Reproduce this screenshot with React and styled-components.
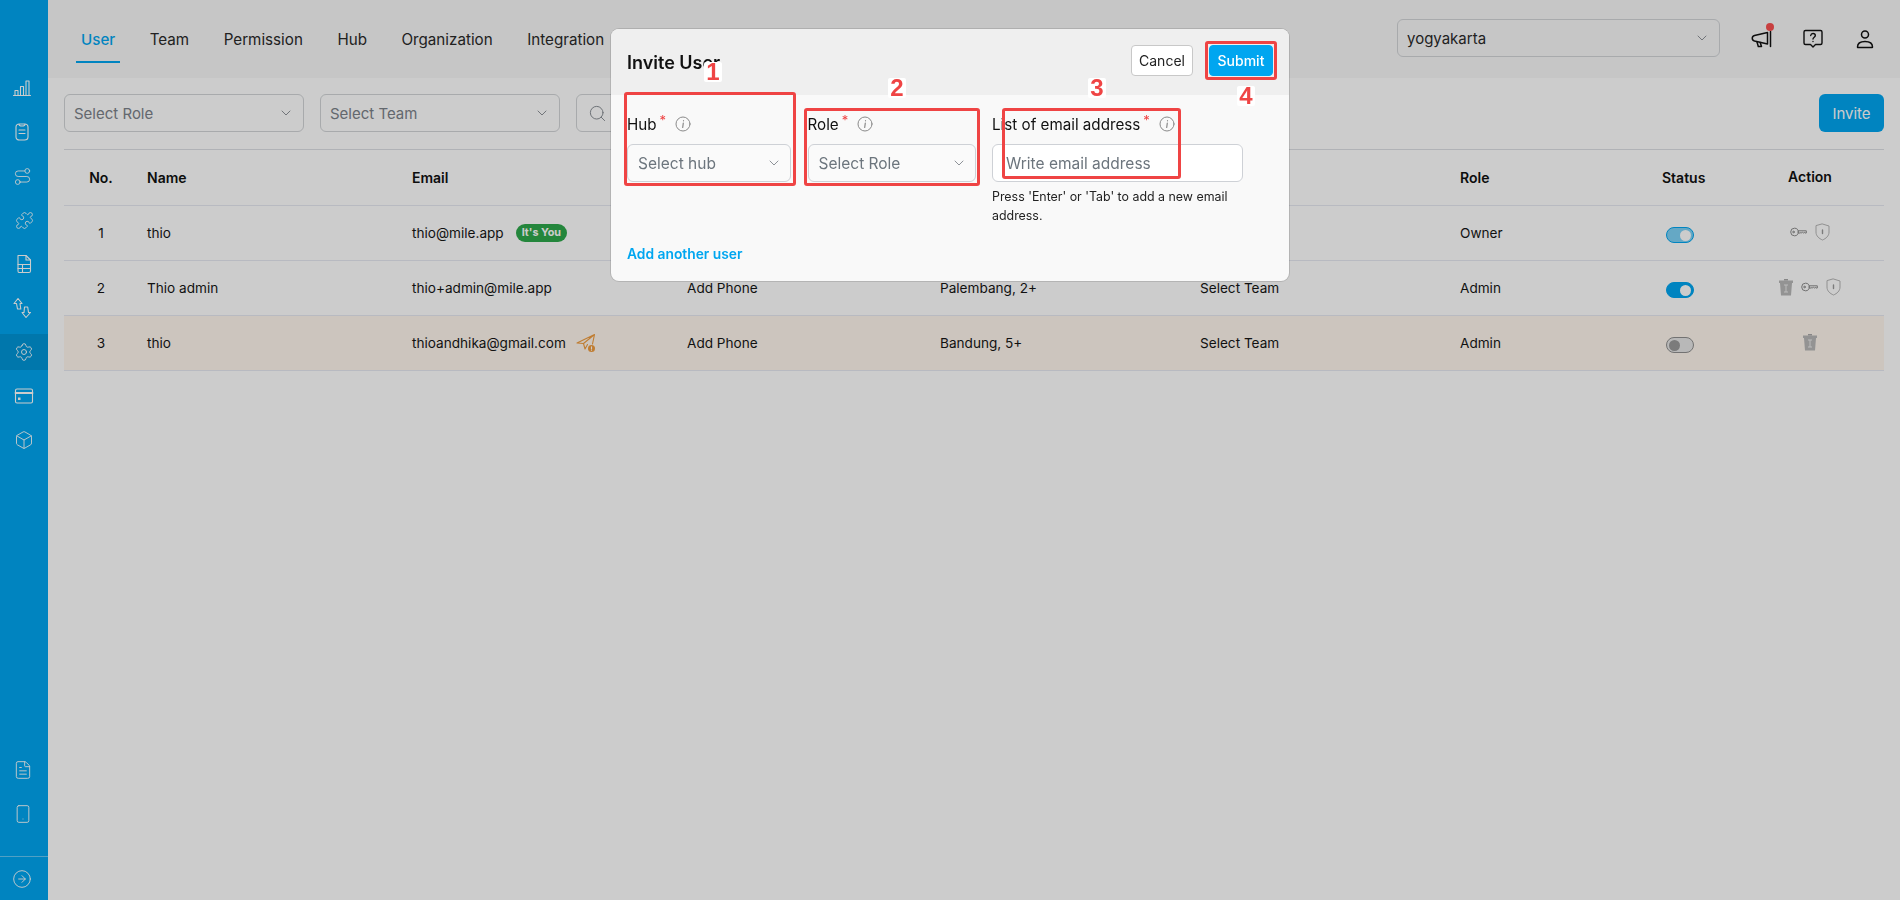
import React from 'react';
import styled, { createGlobalStyle } from 'styled-components';
import {
  Route,
  Puzzle,
  Settings,
  Box,
  FileText,
  Smartphone,
  CircleArrowRight,
  ChevronDown,
  Search,
} from 'lucide-react';

const GlobalStyle = createGlobalStyle`
  html, body {
    margin: 0;
    height: 100%;
    overflow: hidden;
  }
  body {
    font-family: Inter, "Liberation Sans", sans-serif;
    font-size: 13.6px;
    color: #161616;
    background: #fff;
  }
`;

const Page = styled.div`
  display: flex;
  height: 900px;
`;

const Sidebar = styled.nav`
  width: 48px;
  flex-shrink: 0;
  background: #00a6f0;
  display: flex;
  flex-direction: column;
  padding-top: 70px;
  box-sizing: border-box;
`;

const NavGroup = styled.div`
  display: flex;
  flex-direction: column;
  gap: 8px;
`;

const NavBottom = styled(NavGroup)`
  margin-top: auto;
`;

const NavItem = styled.div`
  height: 36px;
  display: flex;
  align-items: center;
  justify-content: center;
  color: #fff;
  background: ${(p) => (p.$active ? '#0095d8' : 'transparent')};
`;

const NavFooter = styled.div`
  margin-top: 24px;
  height: 43px;
  border-top: 1px solid rgba(255, 255, 255, 0.4);
  display: flex;
  align-items: center;
  justify-content: center;
  color: #fff;
`;

const Main = styled.main`
  flex: 1;
  min-width: 0;
`;

const TopBar = styled.header`
  height: 78px;
  background: #f8f8f8;
  display: flex;
  align-items: flex-start;
  padding: 0 23px 0 28px;
  box-sizing: border-box;
`;

const Tabs = styled.div`
  display: flex;
  gap: 24.5px;
  margin-top: 18px;
  flex: 1;
`;

const Tab = styled.div`
  height: 43px;
  line-height: 43px;
  padding: 0 5px;
  font-size: 15.2px;
  border-bottom: 2px solid ${(p) => (p.$active ? '#00a6f0' : 'transparent')};
  color: ${(p) => (p.$active ? '#00a6f0' : '#2a2a2a')};
  font-weight: ${(p) => (p.$active ? 500 : 400)};
`;

const SelectBox = styled.div`
  width: ${(p) => p.$width}px;
  height: 38px;
  box-sizing: border-box;
  border: 1px solid #d2d5d8;
  border-radius: 6px;
  display: flex;
  align-items: center;
  justify-content: space-between;
  padding: 0 9px;
  font-size: 15px;
  color: ${(p) => (p.$filled ? '#2a2a2a' : '#7c828a')};

  svg {
    color: #858a90;
  }
`;

const LocationBox = styled(SelectBox)`
  margin-top: 19px;
`;

const ModalSelect = styled(SelectBox)`
  background: #fafafa;
  border-color: #ced1d6;
  padding: 0 8px 0 10px;
  font-size: 15.5px;
  color: #6c757d;
`;

const TopIcons = styled.div`
  display: flex;
  margin-top: 27px;
  margin-left: 29px;
  gap: 28px;
`;

const TopIcon = styled.div`
  position: relative;
  width: 24px;
  height: 24px;
  display: flex;
  align-items: center;
  justify-content: center;
  color: #111;
`;

const Dot = styled.span`
  position: absolute;
  top: -4px;
  right: -1px;
  width: 8px;
  height: 8px;
  border-radius: 50%;
  background: #f94f4f;
`;

const Content = styled.section`
  padding: 16px 16px 0;
`;

const FilterRow = styled.div`
  display: flex;
  gap: 16px;
  padding-bottom: 17px;
  border-bottom: 1px solid #dcdfe4;
`;

const SearchBox = styled.div`
  width: 300px;
  height: 38px;
  box-sizing: border-box;
  border: 1px solid #d2d5d8;
  border-radius: 6px;
  display: flex;
  align-items: center;
  padding: 0 11px;
  color: #858a90;
`;

const InviteButton = styled.button`
  margin-left: auto;
  width: 65px;
  height: 38px;
  border: 0;
  border-radius: 6px;
  background: #00a6f0;
  color: #fff;
  font-family: inherit;
  font-size: 15px;
`;

const Row = styled.div`
  display: grid;
  grid-template-columns: 83px 265px 275px 253px 260px 260px 200px 76px 148px;
  align-items: center;
  height: 55px;
  box-sizing: border-box;
  border-bottom: 1px solid #e6e9f2;
  background: ${(p) => (p.$warn ? '#fff7ee' : 'transparent')};
`;

const HeadRow = styled(Row)`
  height: 56px;
  font-size: 14px;
  font-weight: 600;
  color: #111;
`;

const NoCell = styled.div`
  text-align: center;
  padding-right: 9px;
`;

const Cell = styled.div`
  display: flex;
  align-items: center;
`;

const StatusCell = styled(Cell)`
  padding-left: ${(p) => p.$pad}px;
`;

const ActionCell = styled(Cell)`
  justify-content: center;
  gap: 8px;
  margin-top: -2px;
`;

const YouBadge = styled.span`
  margin-left: 12px;
  height: 18px;
  line-height: 18px;
  padding: 0 6px;
  border-radius: 9px;
  background: #2ea84b;
  color: #fff;
  font-size: 10.8px;
  font-weight: 700;
`;

const Toggle = styled.span`
  width: 28px;
  height: 16px;
  margin-top: 4px;
  box-sizing: border-box;
  border-radius: 8px;
  display: flex;
  align-items: center;
  padding: 0 2px;
  justify-content: ${(p) => (p.$on ? 'flex-end' : 'flex-start')};
  background: ${(p) => (p.$on ? (p.$muted ? '#7fd2f7' : '#00a6f0') : '#e6e6e6')};
  border: 1px solid ${(p) => (p.$on ? '#00a6f0' : '#8f8f8f')};

  &::after {
    content: '';
    width: 11px;
    height: 11px;
    border-radius: 50%;
    background: ${(p) => (p.$on ? '#fff' : '#9a9a9a')};
  }
`;

const Backdrop = styled.div`
  position: fixed;
  inset: 0;
  background: rgba(0, 0, 0, 0.2);
  display: flex;
  justify-content: center;
  align-items: flex-start;
  padding-top: 29px;
`;

const Modal = styled.div`
  position: relative;
  width: 678px;
  background: #f9f9f9;
  border-radius: 8px;
  box-shadow: 0 0 0 1px rgba(0, 0, 0, 0.12);
`;

const ModalHead = styled.div`
  height: 66px;
  box-sizing: border-box;
  padding: 16px 16px 0;
  display: flex;
  align-items: flex-start;
  gap: 16px;
  background: #efefef;
  border-radius: 8px 8px 0 0;
`;

const ModalTitle = styled.h2`
  margin: 7px auto 0 0;
  font-size: 18px;
  line-height: 22px;
  font-weight: 600;
  color: #111;
`;

const ModalButton = styled.button`
  height: 31px;
  width: ${(p) => p.$width}px;
  border-radius: 4px;
  font-family: inherit;
  font-size: 14px;
  padding: 0;
  border: 1px solid ${(p) => (p.$primary ? '#00a6f0' : '#c8c8c8')};
  background: ${(p) => (p.$primary ? '#00a6f0' : '#fff')};
  color: ${(p) => (p.$primary ? '#fff' : '#222')};
  font-weight: ${(p) => (p.$primary ? 500 : 400)};
`;

const ModalBody = styled.div`
  padding: 19px 16px 18px;
`;

const Fields = styled.div`
  display: grid;
  grid-template-columns: 164px 168px 251px;
  column-gap: 16.5px;
`;

const Field = styled.div`
  min-width: 0;
`;

const Label = styled.div`
  height: 20px;
  margin-bottom: 10px;
  display: flex;
  align-items: center;
  font-size: 15.2px;
  color: #111;
  white-space: nowrap;
`;

const Star = styled.span`
  color: #ef4444;
  font-size: 13px;
  line-height: 1;
  margin: -7px 9px 0 3px;
`;

const EmailInput = styled.input`
  width: 100%;
  height: 38px;
  box-sizing: border-box;
  border: 1px solid #ced1d6;
  border-radius: 6px;
  padding: 0 13px;
  font-family: inherit;
  font-size: 15.5px;
  background: #fff;

  &::placeholder {
    color: #6c757d;
    opacity: 1;
  }
`;

const Helper = styled.p`
  margin: 5px 0 0;
  font-size: 12.4px;
  line-height: 19px;
  color: #222;
`;

const AddLink = styled.div`
  margin-top: 20px;
  font-size: 13.8px;
  line-height: 18px;
  font-weight: 600;
  color: #00a6f0;
`;

const Mark = styled.div`
  position: absolute;
  left: ${(p) => p.$x}px;
  top: ${(p) => p.$y}px;
  width: ${(p) => p.$w}px;
  height: ${(p) => p.$h}px;
  box-sizing: border-box;
  border: 3px solid #ef4444;
  border-radius: 3px;
  pointer-events: none;
`;

const MarkNumber = styled.span`
  position: absolute;
  left: ${(p) => p.$x}px;
  top: ${(p) => p.$y}px;
  width: 18px;
  height: 20px;
  background: #fff;
  color: #ef4444;
  font-family: "Liberation Sans", Arial, sans-serif;
  font-size: 24px;
  line-height: 20px;
  font-weight: 700;
  text-align: center;
  border-radius: 2px;
`;

const line = { fill: 'none', stroke: 'currentColor', strokeLinecap: 'round', strokeLinejoin: 'round' };

const Bars = () => (
  <svg width="20" height="20" viewBox="0 0 20 20" {...line} strokeWidth="1.1" style={{ marginLeft: -4 }}>
    <path d="M1.500 17.500h17M3 17.500v-5h3v5M8.500 17.500v-9h3v9M14 17.500V3h3v14.500" />
  </svg>
);

const Drum = () => (
  <svg width="20" height="20" viewBox="0 0 20 20" {...line} strokeWidth="1.1" style={{ marginLeft: -4 }}>
    <path d="M7.500 2h5c2 0 3.500 1 3.500 3v10c0 2-1.500 3-3.500 3h-5C5.500 18 4 17 4 15V5c0-2 1.500-3 3.500-3z" />
    <path d="M7 2.200c0 1.200 1 1.800 3 1.800s3-.6 3-1.800M7 8h6M7 11.500h6" />
  </svg>
);

const SheetFile = () => (
  <svg width="20" height="20" viewBox="0 0 20 20" {...line} strokeWidth="1.1">
    <path d="M4 1.500h8l4.500 4.500v11c0 1-.5 1.500-1.500 1.500H5c-.7 0-1-.5-1-1.500z" />
    <path d="M4 10.500h12.500M4 14.500h12.500M8.500 10.500v8M12 1.500v4.500h4.500" />
  </svg>
);

const Swap = () => (
  <svg width="22" height="22" viewBox="0 0 22 22" {...line} strokeWidth="1.1" style={{ marginLeft: -2 }}>
    <path d="M6 1.500l4 5H8l.8 5.500H5.500L4.500 6.500H2z" />
    <path d="M14 20.500l4.500-5h-2l-.8-5.500h-3.200l-.5 5.500H10z" />
  </svg>
);

const Card = () => (
  <svg width="20" height="20" viewBox="0 0 20 20" {...line} strokeWidth="1.1">
    <rect x="1.500" y="3" width="17" height="14" rx="1.500" />
    <path d="M1.500 7h17" strokeWidth="1.800" />
    <rect x="4" y="11.500" width="2.500" height="2.500" fill="currentColor" stroke="none" />
  </svg>
);

const Horn = () => (
  <svg width="24" height="24" viewBox="0 0 24 24" {...line} strokeWidth="1.500">
    <path d="M5.500 8.500L18.500 5.500v11.500l-13-3c-3-.8-3-4.800 0-5.500z" />
    <path d="M21.500 4.500v15M8 15l1.300 4.500h3.200L11.200 15.500" />
  </svg>
);

const HelpChat = () => (
  <svg width="22" height="22" viewBox="0 0 22 22" {...line} strokeWidth="1.400">
    <path d="M3.500 2.500h15c1 0 1.500.5 1.500 1.500v11c0 1-.5 1.500-1.500 1.500h-5L11 19l-2.500-2.500h-5c-1 0-1.500-.5-1.500-1.500V4c0-1 .5-1.500 1.500-1.500z" />
    <path d="M8.700 7.500c.2-1.300 1.100-2 2.300-2 1.300 0 2.300.8 2.300 2 0 1.700-2.300 1.700-2.300 3.500M11 13.500v.1" />
  </svg>
);

const Person = () => (
  <svg width="22" height="22" viewBox="0 0 22 22" {...line} strokeWidth="1.500">
    <circle cx="11" cy="6.500" r="3.500" />
    <path d="M3.500 19c0-3.800 3.200-5.500 7.500-5.500s7.500 1.700 7.500 5.500c0 .3-.2.500-.5.500H4c-.3 0-.5-.2-.5-.5z" />
  </svg>
);

const Info = () => (
  <svg width="16" height="16" viewBox="0 0 16 16" {...line} stroke="#8a8a8a" strokeWidth="1">
    <circle cx="8" cy="8" r="7" />
    <path d="M8.300 7.200L7.700 11.500M8.500 4.700v.1" strokeWidth="1.200" />
  </svg>
);

const Key = () => (
  <svg width="17" height="10" viewBox="0 0 17 10" {...line} stroke="#8c8c8c" strokeWidth="1">
    <circle cx="4.500" cy="5" r="3.800" />
    <circle cx="3.500" cy="5" r=".8" />
    <path d="M8.300 3.800h8v2.200h-1.300l-.8-.7-.8.7-.8-.7-.8.7-.8-.7-.8.7H8.300" />
  </svg>
);

const Shield = () => (
  <svg width="15" height="18" viewBox="0 0 15 18" {...line} stroke="#b5b5b5" strokeWidth="1">
    <path d="M7.500 1l6.500 2v6c0 4-3 6.500-6.500 8C4 15.500 1 13 1 9V3z" />
    <path d="M7.500 7v3.500" stroke="#9a9a9a" strokeWidth="1.400" />
  </svg>
);

const Trash = () => (
  <svg width="14" height="18" viewBox="0 0 14 18">
    <path d="M0 2.500h14V5H13l-1 12.500H2L1 5H0z" fill="#b8b8b8" />
    <path d="M5 1h4v1.500H5z" fill="#a8a8a8" />
    <path d="M5 7h4M7 7v7M5 14h4" fill="none" stroke="#eaeaea" strokeWidth="1" />
  </svg>
);

const Plane = () => (
  <svg width="20" height="20" viewBox="0 0 20 20" style={{ marginLeft: 10 }}>
    <path d="M1 10L18.500 1.500 16.500 11M18.500 1.500L7.500 10.500 1 10M7.500 10.500l1.500 5.500 2.500-4.500" fill="none" stroke="#f09d3f" strokeWidth="1.100" strokeLinejoin="round" strokeLinecap="round" />
    <circle cx="15.500" cy="15.500" r="3.500" fill="#f09d3f" />
    <path d="M15.500 13.700v2.200M15.500 17.200v.1" stroke="#fff" strokeWidth="1.100" strokeLinecap="round" />
  </svg>
);

const chevron = <ChevronDown size={16} strokeWidth={1.4} />;

const tabs = ['User', 'Team', 'Permission', 'Hub', 'Organization', 'Integration'];

const users = [
  { no: 1, name: 'thio', email: 'thio@mile.app', you: true, phone: 'Add Phone', hub: 'Yogyakarta', team: 'Select Team', role: 'Owner', on: true, muted: true, actions: ['key', 'shield'] },
  { no: 2, name: 'Thio admin', email: 'thio+admin@mile.app', phone: 'Add Phone', hub: 'Palembang, 2+', team: 'Select Team', role: 'Admin', on: true, actions: ['trash', 'key', 'shield'] },
  { no: 3, name: 'thio', email: 'thioandhika@gmail.com', pending: true, phone: 'Add Phone', hub: 'Bandung, 5+', team: 'Select Team', role: 'Admin', on: false, actions: ['trash'] },
];

const actionIcons = { key: <Key />, shield: <Shield />, trash: <Trash /> };

const App = () => {
  return (
    <>
      <GlobalStyle />
      <Page>
        <Sidebar>
          <NavGroup>
            <NavItem><Bars /></NavItem>
            <NavItem><Drum /></NavItem>
            <NavItem><Route size={19} strokeWidth={1.1} style={{ marginLeft: -3 }} /></NavItem>
            <NavItem><Puzzle size={19} strokeWidth={1.1} /></NavItem>
            <NavItem><SheetFile /></NavItem>
            <NavItem><Swap /></NavItem>
            <NavItem $active><Settings size={20} strokeWidth={1.1} /></NavItem>
            <NavItem><Card /></NavItem>
            <NavItem><Box size={20} strokeWidth={1.1} /></NavItem>
          </NavGroup>
          <NavBottom>
            <NavItem><FileText size={20} strokeWidth={1.1} style={{ marginLeft: -2 }} /></NavItem>
            <NavItem><Smartphone size={20} strokeWidth={1.1} style={{ marginLeft: -2 }} /></NavItem>
          </NavBottom>
          <NavFooter>
            <CircleArrowRight size={20} strokeWidth={1.1} style={{ marginLeft: -4 }} />
          </NavFooter>
        </Sidebar>

        <Main>
          <TopBar>
            <Tabs>
              {tabs.map((t, i) => (
                <Tab key={t} $active={i === 0}>{t}</Tab>
              ))}
            </Tabs>
            <LocationBox $width={323} $filled>
              yogyakarta
              {chevron}
            </LocationBox>
            <TopIcons>
              <TopIcon>
                <Horn />
                <Dot />
              </TopIcon>
              <TopIcon><HelpChat /></TopIcon>
              <TopIcon><Person /></TopIcon>
            </TopIcons>
          </TopBar>

          <Content>
            <FilterRow>
              <SelectBox $width={240}>Select Role{chevron}</SelectBox>
              <SelectBox $width={240}>Select Team{chevron}</SelectBox>
              <SearchBox><Search size={19} strokeWidth={1.2} /></SearchBox>
              <InviteButton>Invite</InviteButton>
            </FilterRow>

            <HeadRow>
              <NoCell>No.</NoCell>
              <Cell>Name</Cell>
              <Cell>Email</Cell>
              <Cell>Phone</Cell>
              <Cell>Hub</Cell>
              <Cell>Team</Cell>
              <Cell>Role</Cell>
              <StatusCell $pad={2}>Status</StatusCell>
              <ActionCell>Action</ActionCell>
            </HeadRow>

            {users.map((u) => (
              <Row key={u.no} $warn={u.pending}>
                <NoCell>{u.no}</NoCell>
                <Cell>{u.name}</Cell>
                <Cell>
                  {u.email}
                  {u.you && <YouBadge>It's You</YouBadge>}
                  {u.pending && <Plane />}
                </Cell>
                <Cell>{u.phone}</Cell>
                <Cell>{u.hub}</Cell>
                <Cell>{u.team}</Cell>
                <Cell>{u.role}</Cell>
                <StatusCell $pad={6}>
                  <Toggle $on={u.on} $muted={u.muted} />
                </StatusCell>
                <ActionCell>
                  {u.actions.map((a) => (
                    <React.Fragment key={a}>{actionIcons[a]}</React.Fragment>
                  ))}
                </ActionCell>
              </Row>
            ))}
          </Content>
        </Main>
      </Page>

      <Backdrop>
        <Modal>
          <ModalHead>
            <ModalTitle>Invite User</ModalTitle>
            <ModalButton $width={62}>Cancel</ModalButton>
            <ModalButton $width={64} $primary>Submit</ModalButton>
          </ModalHead>
          <ModalBody>
            <Fields>
              <Field>
                <Label>Hub<Star>*</Star><Info /></Label>
                <ModalSelect $width={164}>Select hub{chevron}</ModalSelect>
              </Field>
              <Field>
                <Label>Role<Star>*</Star><Info /></Label>
                <ModalSelect $width={168}>Select Role{chevron}</ModalSelect>
              </Field>
              <Field>
                <Label>List of email address<Star>*</Star><Info /></Label>
                <EmailInput placeholder="Write email address" />
                <Helper>Press 'Enter' or 'Tab' to add a new email address.</Helper>
              </Field>
            </Fields>
            <AddLink>Add another user</AddLink>
          </ModalBody>

          <Mark $x={13} $y={63} $w={172} $h={94} />
          <Mark $x={193} $y={79} $w={176} $h={78} />
          <Mark $x={391} $y={79} $w={179} $h={71} />
          <Mark $x={594} $y={12} $w={72} $h={39} />
          <MarkNumber $x={93} $y={33}>1</MarkNumber>
          <MarkNumber $x={277} $y={49}>2</MarkNumber>
          <MarkNumber $x={477} $y={49}>3</MarkNumber>
          <MarkNumber $x={626} $y={57}>4</MarkNumber>
        </Modal>
      </Backdrop>
    </>
  );
};

export default App;
